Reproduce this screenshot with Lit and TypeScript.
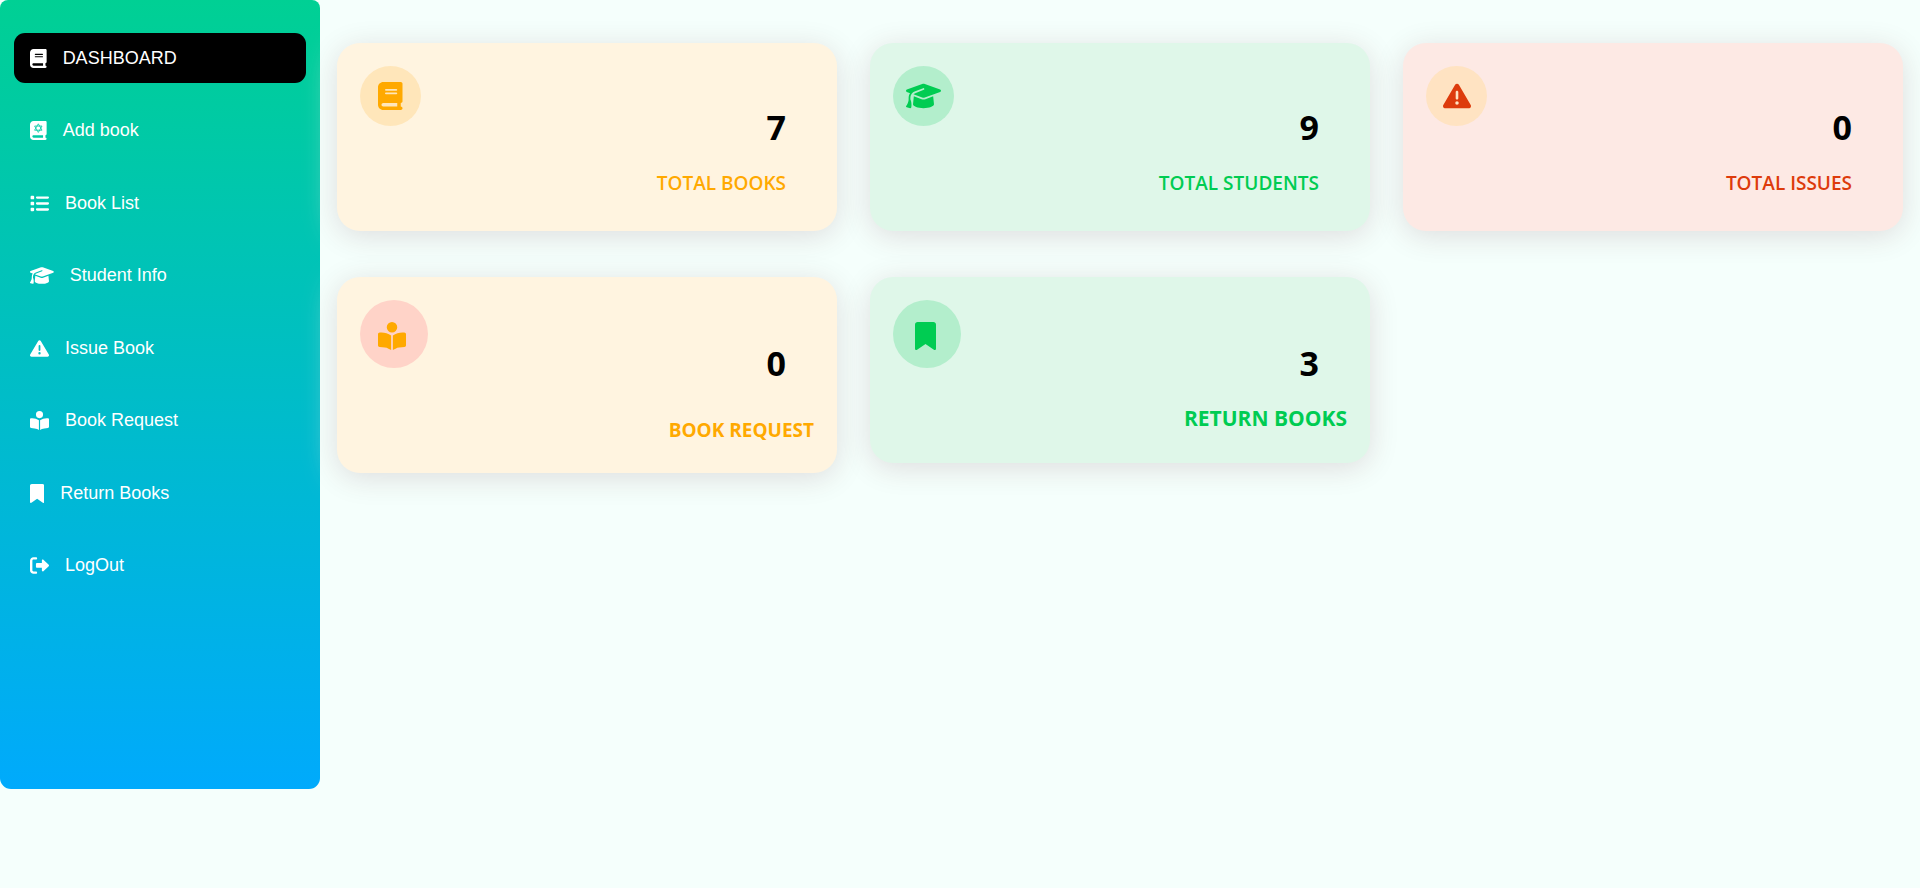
import { LitElement, html, css, svg } from "lit";
import { customElement } from "lit/decorators.js";

type IconName = "book" | "addBook" | "list" | "cap" | "warning" | "reader" | "bookmark" | "logout";

const icons: Record<IconName, { width: number; shape: unknown }> = {
  book: {
    width: 448,
    shape: svg`<path d="M96 0C43 0 0 43 0 96V416c0 53 43 96 96 96H384h32c17.700 0 32-14.300 32-32s-14.300-32-32-32V384c17.700 0 32-14.300 32-32V32c0-17.700-14.300-32-32-32H384 96zm0 384H352v64H96c-17.700 0-32-14.300-32-32s14.300-32 32-32zm32-240c0-8.800 7.200-16 16-16H336c8.800 0 16 7.200 16 16s-7.200 16-16 16H144c-8.800 0-16-7.200-16-16zm16 48H336c8.800 0 16 7.200 16 16s-7.200 16-16 16H144c-8.800 0-16-7.200-16-16s7.200-16 16-16z"/>`,
  },
  addBook: {
    width: 448,
    shape: svg`<path fill-rule="evenodd" d="M96 0C43 0 0 43 0 96V416c0 53 43 96 96 96H416c17.700 0 32-14.300 32-32s-14.300-32-32-32V384c17.700 0 32-14.300 32-32V32c0-17.700-14.300-32-32-32H96zM96 384H352v64H96c-17.700 0-32-14.300-32-32s14.300-32 32-32z"/><path class="cut" d="M224 76 L324 248 H124 Z M224 308 L124 136 H324 Z"/>`,
  },
  list: {
    width: 512,
    shape: svg`<path d="M40 48C26.700 48 16 58.700 16 72v48c0 13.300 10.700 24 24 24H88c13.300 0 24-10.700 24-24V72c0-13.300-10.700-24-24-24H40zM192 64c-17.700 0-32 14.300-32 32s14.300 32 32 32H480c17.700 0 32-14.300 32-32s-14.300-32-32-32H192zm0 160c-17.700 0-32 14.300-32 32s14.300 32 32 32H480c17.700 0 32-14.300 32-32s-14.300-32-32-32H192zm0 160c-17.700 0-32 14.300-32 32s14.300 32 32 32H480c17.700 0 32-14.300 32-32s-14.300-32-32-32H192zM16 232v48c0 13.300 10.700 24 24 24H88c13.300 0 24-10.700 24-24V232c0-13.300-10.700-24-24-24H40c-13.300 0-24 10.700-24 24zM40 368c-13.300 0-24 10.700-24 24v48c0 13.300 10.700 24 24 24H88c13.300 0 24-10.700 24-24V392c0-13.300-10.700-24-24-24H40z"/>`,
  },
  cap: {
    width: 640,
    shape: svg`<path d="M320 32c-8.100 0-16.100 1.400-23.700 4.100L15.800 137.400C6.300 140.900 0 149.900 0 160s6.300 19.100 15.800 22.600l57.900 20.900C57.300 229.300 48 259.800 48 291.900v28.100c0 28.400-10.800 57.700-22.300 80.800c-6.500 13-13.900 25.800-22.500 37.600C0 442.700-.9 448.300 .9 453.400s6 8.900 11.200 10.200l64 16c4.200 1.100 8.700 .3 12.400-2s6.300-6.100 7.100-10.400c8.600-42.800 4.300-81.200-2.100-108.700C90.300 344.300 86 329.800 80 316.500V291.900c0-30.200 10.200-58.700 27.900-81.500c12.900-15.500 29.600-28 49.200-35.700l157-61.700c8.200-3.200 17.500 .8 20.700 9s-.8 17.500-9 20.700l-157 61.700c-12.400 4.900-23.300 12.400-32.200 21.600l159.600 57.600c7.600 2.700 15.600 4.100 23.700 4.100s16.100-1.400 23.700-4.100L624.200 182.600c9.500-3.400 15.800-12.500 15.800-22.600s-6.300-19.100-15.800-22.600L343.700 36.100C336.100 33.400 328.100 32 320 32zM128 408c0 35.300 86 72 192 72s192-36.700 192-72L496.700 262.600 354.500 314c-11.100 4-22.800 6-34.500 6s-23.500-2-34.500-6L143.300 262.600 128 408z"/>`,
  },
  warning: {
    width: 512,
    shape: svg`<path d="M256 32c14.200 0 27.300 7.500 34.500 19.800l216 368c7.300 12.400 7.300 27.700 .2 40.100S486.300 480 472 480H40c-14.300 0-27.600-7.700-34.700-20.100s-7-27.800 .2-40.100l216-368C228.700 39.500 241.800 32 256 32zm0 128c-13.300 0-24 10.700-24 24V296c0 13.300 10.700 24 24 24s24-10.700 24-24V184c0-13.300-10.700-24-24-24zm32 224a32 32 0 1 0 -64 0 32 32 0 1 0 64 0z"/>`,
  },
  reader: {
    width: 512,
    shape: svg`<path d="M160 96a96 96 0 1 1 192 0A96 96 0 1 1 160 96zm80 152V512l-48.400-24.200c-20.900-10.400-43.500-17-66.800-19.300l-96-9.600C12.500 457.200 0 443.500 0 427V224c0-17.700 14.300-32 32-32H62.300c63.600 0 125.600 19.600 177.700 56zm32 264V248c52.100-36.400 114.100-56 177.700-56H480c17.700 0 32 14.300 32 32V427c0 16.400-12.500 30.200-28.800 31.800l-96 9.600c-23.200 2.300-45.900 8.900-66.800 19.300L272 512z"/>`,
  },
  bookmark: {
    width: 384,
    shape: svg`<path d="M0 48V487.700C0 501.100 10.900 512 24.300 512c5 0 9.900-1.500 14-4.400L192 400 345.700 507.600c4.100 2.900 9 4.400 14 4.400c13.400 0 24.300-10.900 24.300-24.300V48c0-26.500-21.500-48-48-48H48C21.500 0 0 21.500 0 48z"/>`,
  },
  logout: {
    width: 512,
    shape: svg`<path d="M160 96c17.700 0 32-14.300 32-32s-14.300-32-32-32H96C43 32 0 75 0 128V384c0 53 43 96 96 96h64c17.700 0 32-14.300 32-32s-14.300-32-32-32H96c-17.700 0-32-14.300-32-32V128c0-17.700 14.300-32 32-32h64zm344.500 177c4.800-4.500 7.500-10.800 7.500-17.400s-2.700-12.900-7.500-17.400l-144-136c-7-6.600-17.200-8.400-26-4.600s-14.500 12.500-14.500 22v72H192c-17.700 0-32 14.300-32 32v64c0 17.700 14.300 32 32 32H320v72c0 9.600 5.700 18.200 14.500 22s19 2 26-4.600l144-136z"/>`,
  },
};

const icon = (name: IconName) => html`<svg
  class="icon"
  viewBox="0 0 ${icons[name].width} 512"
  aria-hidden="true"
>${icons[name].shape}</svg>`;

const links: { label: string; icon: IconName; active?: boolean }[] = [
  { label: "DASHBOARD", icon: "book", active: true },
  { label: "Add book", icon: "addBook" },
  { label: "Book List", icon: "list" },
  { label: "Student Info", icon: "cap" },
  { label: "Issue Book", icon: "warning" },
  { label: "Book Request", icon: "reader" },
  { label: "Return Books", icon: "bookmark" },
  { label: "LogOut", icon: "logout" },
];

const cards: { label: string; value: number; icon: IconName; kind: string }[] = [
  { label: "TOTAL BOOKS", value: 7, icon: "book", kind: "amber" },
  { label: "TOTAL STUDENTS", value: 9, icon: "cap", kind: "green" },
  { label: "TOTAL ISSUES", value: 0, icon: "warning", kind: "red" },
  { label: "BOOK REQUEST", value: 0, icon: "reader", kind: "amber request" },
  { label: "RETURN BOOKS", value: 3, icon: "bookmark", kind: "green returned" },
];

@customElement("app-root")
export class AppRoot extends LitElement {
  static styles = css`
    :host {
      display: flex;
      align-items: flex-start;
      min-height: 100vh;
      background: #f5fffc;
      font-family: "Segoe UI", "Open Sans", "Noto Sans", sans-serif;
    }
    * {
      box-sizing: border-box;
    }
    .icon {
      display: block;
      height: 1em;
      width: auto;
      fill: currentColor;
    }
    .cut {
      fill: none;
      stroke: #00caa4;
      stroke-width: 22;
    }
    .sidebar {
      flex: none;
      width: 320px;
      height: 789px;
      padding: 33px 14px 198px;
      border-radius: 8px 8px 11px 11px;
      background: linear-gradient(#00d094, #00aafc);
    }
    .menu {
      display: flex;
      flex-direction: column;
      justify-content: space-between;
      height: 100%;
      margin: 0;
      padding: 0;
      list-style: none;
    }
    .link {
      display: flex;
      align-items: center;
      gap: 16px;
      height: 50px;
      padding: 0 16px;
      border-radius: 11px;
      color: #fff;
      font: 18px "Liberation Sans", Arial, sans-serif;
      text-decoration: none;
    }
    .link .icon {
      height: 19px;
    }
    .link.active {
      background: #000;
    }
    .cards {
      flex: 1;
      display: grid;
      grid-template-columns: repeat(3, minmax(0, 1fr));
      align-items: start;
      gap: 46px 33px;
      padding: 43px 17px;
    }
    .card {
      height: 188px;
      padding: 23px;
      border-radius: 23px;
      color: var(--accent);
      background: var(--tint);
      box-shadow: 0 5px 30px #ddd;
    }
    .badge {
      display: flex;
      align-items: center;
      justify-content: center;
      width: 61px;
      height: 60px;
      border-radius: 50%;
      background: var(--badge);
      font-size: 28px;
    }
    .value,
    .label {
      margin: 0;
      padding-right: 28px;
      text-align: right;
    }
    .value {
      margin-top: -21px;
      color: #000;
      font-size: 34px;
      line-height: 44px;
      font-weight: 700;
    }
    .label {
      margin-top: 20px;
      font-size: 19px;
      line-height: 28px;
      font-weight: 600;
    }
    .amber {
      --accent: #ffa900;
      --tint: #fff4e0;
      --badge: #ffe6ba;
    }
    .green {
      --accent: #00cc52;
      --tint: #dff7e9;
      --badge: #b3eecc;
    }
    .red {
      --accent: #dd3b0c;
      --tint: #fde9e4;
      --badge: #ffe3c2;
    }
    .request {
      --badge: #ffd3c8;
      height: 196px;
    }
    .returned {
      height: 186px;
    }
    .request .badge,
    .returned .badge {
      width: 68px;
      height: 68px;
      padding: 4px 4px 0 0;
    }
    .request .value,
    .returned .value {
      margin-top: -27px;
    }
    .request .label,
    .returned .label {
      margin-top: 19px;
      padding: 0;
      font-weight: 700;
    }
    .request .label {
      margin-top: 31px;
    }
    .returned .label {
      font-size: 21px;
    }
  `;

  render() {
    return html`
      <nav class="sidebar" aria-label="Main">
        <ul class="menu">
          ${links.map(
            (l) => html`<li>
              <a class="link ${l.active ? "active" : ""}" href="#">${icon(l.icon)}<span>${l.label}</span></a>
            </li>`
          )}
        </ul>
      </nav>
      <main class="cards">
        ${cards.map(
          (c) => html`<section class="card ${c.kind}">
            <div class="badge">${icon(c.icon)}</div>
            <p class="value">${c.value}</p>
            <h2 class="label">${c.label}</h2>
          </section>`
        )}
      </main>
    `;
  }
}
